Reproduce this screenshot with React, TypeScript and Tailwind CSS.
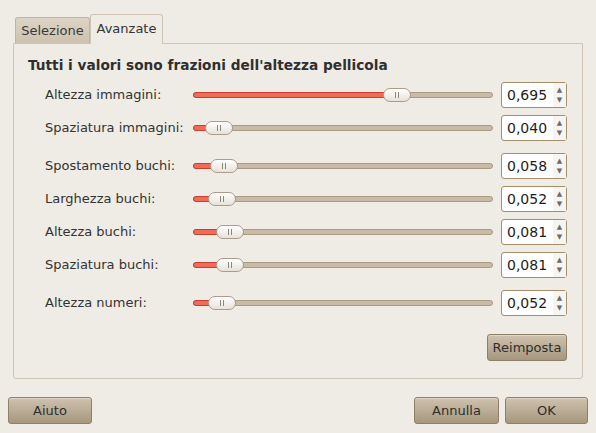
import React from "react";

const rows: { label: string; value: number; text: string }[][] = [
  [
    { label: "Altezza immagini:", value: 0.695, text: "0,695" },
    { label: "Spaziatura immagini:", value: 0.04, text: "0,040" },
  ],
  [
    { label: "Spostamento buchi:", value: 0.058, text: "0,058" },
    { label: "Larghezza buchi:", value: 0.052, text: "0,052" },
    { label: "Altezza buchi:", value: 0.081, text: "0,081" },
    { label: "Spaziatura buchi:", value: 0.081, text: "0,081" },
  ],
  [{ label: "Altezza numeri:", value: 0.052, text: "0,052" }],
];

function Slider({ value }: { value: number }) {
  const travel = 300 - 28;
  const left = Math.round(value * travel) + 1;
  return (
    <div className="relative h-[14px] w-[300px] shrink-0">
      <div className="absolute left-0 right-0 top-[4px] h-[6px] rounded-full border border-[#a89a83] bg-[#c8bca8]" />
      <div
        className="absolute left-0 top-[4px] h-[6px] rounded-full border border-[#c4402f] bg-[#f26b58]"
        style={{ width: left + 14 }}
      />
      <div
        className="absolute top-0 flex h-[14px] w-[28px] items-center justify-center gap-[2px] rounded-full border border-[#a99e8d] bg-gradient-to-b from-[#ffffff] to-[#e7e2d9]"
        style={{ left }}
      >
        <div className="h-[6px] w-px bg-[#8e8678]" />
        <div className="h-[6px] w-px bg-[#8e8678]" />
      </div>
    </div>
  );
}

function Spin({ text }: { text: string }) {
  return (
    <div className="flex h-[26px] w-[66px] items-stretch rounded-[3px] border border-[#a38f6c] bg-white">
      <div className="flex flex-1 items-center pl-[5px] text-[14px] text-[#1e1e1e]">{text}</div>
      <div className="flex w-[13px] flex-col items-center justify-center bg-[#f7f5f2] text-[7px] leading-[10px] text-[#6b6b6b]">
        <span>▲</span>
        <span>▼</span>
      </div>
    </div>
  );
}

function Button({ children, w }: { children: React.ReactNode; w: string }) {
  return (
    <div
      className={`flex h-[27px] ${w} items-center justify-center rounded-[3px] border border-[#8f7f68] bg-gradient-to-b from-[#cfc2ae] to-[#a6977e] text-[13px] text-[#2e2e2e] shadow-[inset_0_1px_0_rgba(255,255,255,0.35)]`}
    >
      {children}
    </div>
  );
}

export default function App() {
  return (
    <div
      className="flex h-[433px] w-[596px] flex-col bg-[#efebe5] text-[#333333]"
      style={{ fontFamily: "'DejaVu Sans', sans-serif" }}
    >
      <div className="px-[13px] pt-[14px]">
        <div className="flex items-end pl-[2px]">
          <div className="flex h-[26px] w-[75px] items-center justify-center rounded-t-[3px] border border-b-0 border-[#c2b59f] bg-gradient-to-b from-[#ddd4c5] to-[#cdc2b0] text-[13px] text-[#3a3a3a]">
            Selezione
          </div>
          <div className="relative z-10 -mb-px flex h-[30px] w-[73px] items-center justify-center rounded-t-[3px] border border-b-0 border-[#cfc5b4] bg-[#efebe5] pb-[2px] text-[13px] text-[#333333]">
            Avanzate
          </div>
        </div>
        <div className="flex h-[336px] flex-col rounded-b-[3px] border border-[#cfc5b4] pl-[14px] pr-[14px] pt-[13px]">
          <div className="text-[13.7px] font-bold leading-[17px] text-[#2f2f2f]">
            Tutti i valori sono frazioni dell'altezza pellicola
          </div>
          <div className="mt-[8px] flex flex-col gap-[12px]">
            {rows.map((group, gi) => (
              <div key={gi} className="flex flex-col gap-[7px]">
                {group.map((r) => (
                  <div key={r.label} className="flex h-[26px] items-center">
                    <div className="w-[165px] pl-[17px] text-[13px]">{r.label}</div>
                    <Slider value={r.value} />
                    <div className="ml-[8px]">
                      <Spin text={r.text} />
                    </div>
                  </div>
                ))}
              </div>
            ))}
          </div>
          <div className="mt-[18px] flex justify-end pr-[1px]">
            <Button w="w-[80px]">Reimposta</Button>
          </div>
        </div>
      </div>
      <div className="mt-[18px] flex items-center justify-between px-[8px]">
        <Button w="w-[84px]">Aiuto</Button>
        <div className="flex gap-[6px]">
          <Button w="w-[85px]">Annulla</Button>
          <Button w="w-[83px]">OK</Button>
        </div>
      </div>
    </div>
  );
}
